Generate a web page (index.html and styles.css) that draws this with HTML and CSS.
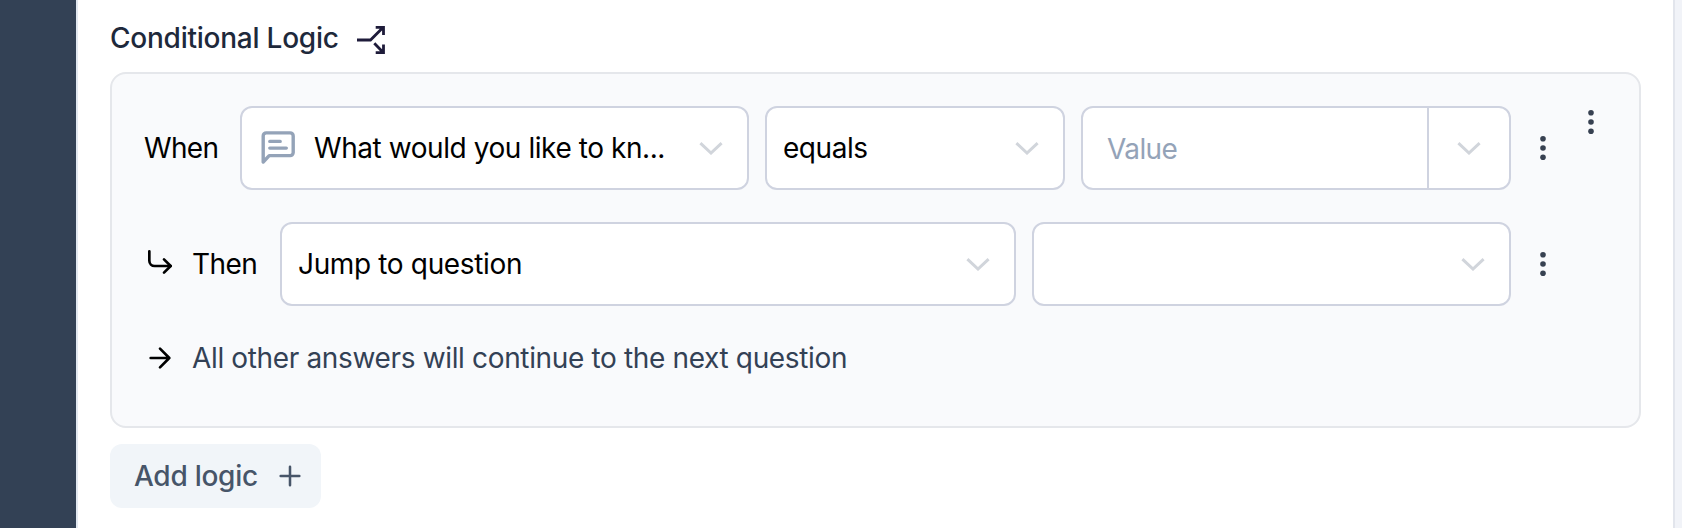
FILE: index.html
```html
<!DOCTYPE html>
<html lang="en">
<head>
<meta charset="utf-8">
<title>Conditional Logic</title>
<link rel="stylesheet" href="styles.css">
</head>
<body>
<svg class="defs" width="0" height="0">
  <symbol id="chevron" viewBox="0 0 24 13"><path d="M1.4 1.2L12 11l10.6-9.8" fill="none" stroke="currentColor" stroke-width="3"/></symbol>
  <symbol id="dots" viewBox="0 0 8 26"><g fill="currentColor"><circle cx="4" cy="3.7" r="2.8"/><circle cx="4" cy="13" r="2.8"/><circle cx="4" cy="22.3" r="2.8"/></g></symbol>
</svg>
<div class="app">
  <aside class="sidebar"></aside>
  <main class="content">
    <h1 class="heading"><span class="heading-text">Conditional Logic</span>
      <svg class="split" viewBox="0 0 32 32"><path d="M3 16H16.5L29 3.6M21.7 3.4h7.8v7.6M20.3 19.3l8.7 8.9M21.7 28.6h7.8v-8"/></svg>
    </h1>
    <section class="panel">
      <div class="rules">
        <div class="row">
          <span class="label when">When</span>
          <div class="select question">
            <svg class="message" viewBox="0 0 36 36"><path d="M3.2 32V5.9a3 3 0 0 1 3-3h24a3 3 0 0 1 3 3v16.7a3 3 0 0 1-3 3H9.2z"/><path d="M9.8 11.4h10.4M9.8 18.1h16.5"/></svg>
            <span class="text long">What would you like to kn...</span>
            <svg class="chevron"><use href="#chevron"/></svg>
          </div>
          <div class="select operator"><span class="text equals">equals</span><svg class="chevron"><use href="#chevron"/></svg></div>
          <div class="select value"><span class="placeholder">Value</span><span class="toggle"><svg class="chevron"><use href="#chevron"/></svg></span></div>
          <svg class="dots"><use href="#dots"/></svg>
        </div>
        <div class="row">
          <svg class="icon" viewBox="0 0 24 24"><path d="M15 10l5 5-5 5"/><path d="M4 4v7a4 4 0 0 0 4 4h12"/></svg>
          <span class="label then">Then</span>
          <div class="select action"><span class="text jump">Jump to question</span><svg class="chevron"><use href="#chevron"/></svg></div>
          <div class="select target"><svg class="chevron"><use href="#chevron"/></svg></div>
          <svg class="dots"><use href="#dots"/></svg>
        </div>
        <div class="fallback">
          <svg class="icon" viewBox="0 0 24 24"><path d="M5 12h14M12 5l7 7-7 7"/></svg>
          <span class="fallback-text">All other answers will continue to the next question</span>
        </div>
      </div>
      <svg class="dots menu"><use href="#dots"/></svg>
    </section>
    <button class="add" type="button"><span class="add-text">Add logic</span>
      <svg class="plus" viewBox="0 0 24 24"><path d="M5 12h14M12 5v14"/></svg>
    </button>
  </main>
  <div class="edge"></div>
</div>
</body>
</html>
```
FILE: styles.css
```css
* { box-sizing: border-box; }
body { margin: 0; background: #fff; font-family: Inter, "Liberation Sans", sans-serif; font-size: 28px; line-height: 40px; color: #000; }
.defs { position: absolute; }
.app { display: flex; height: 528px; overflow: hidden; }
.sidebar { width: 78px; background: #334155; border-right: 2px solid #e2e8f0; flex: none; }
.content { flex: 1; padding: 18px 32px 0; }
.edge { width: 9px; background: #f1f3f8; border-left: 2px solid #e2e5ec; flex: none; }
.heading { display: flex; align-items: center; gap: 16px; margin: 0; height: 40px; font-size: 28px; font-weight: 500; color: #1e293b; }
.heading-text { width: 228px; white-space: nowrap; letter-spacing: -0.24px; }
.split { width: 32px; height: 32px; margin-top: 4px; fill: none; stroke: #1e1b3a; stroke-width: 2.8; }
.panel { display: flex; margin-top: 14px; width: 1531px; height: 356px; padding: 32px; border: 2px solid #e5e7eb; border-radius: 16px; background: #f9fafc; }
.rules { display: flex; flex-direction: column; gap: 32px; width: 1403px; }
.row { display: flex; align-items: center; height: 84px; }
.label, .text, .placeholder, .fallback-text, .add-text { white-space: nowrap; }
.when { width: 96px; letter-spacing: -0.65px; }
.then { width: 88px; margin-left: 16px; letter-spacing: -0.55px; flex: none; }
.select { display: flex; align-items: center; justify-content: space-between; height: 84px; padding: 0 24px 0 16px; border: 2px solid #cfd3e0; border-radius: 12px; background: #fff; flex: none; }
.question { width: 509px; }
.operator { width: 300px; margin-left: 16px; }
.value { width: 430px; margin-left: 16px; padding: 0 0 0 24px; }
.action { width: 736px; }
.target { width: 479px; margin-left: 16px; justify-content: flex-end; }
.message { width: 36px; height: 36px; margin: 0 18px 0 2px; fill: none; stroke: #94a3b8; stroke-width: 3.4; stroke-linecap: round; stroke-linejoin: round; flex: none; }
.long { flex: 1; letter-spacing: -0.43px; }
.equals { letter-spacing: -0.45px; }
.jump { letter-spacing: -0.35px; }
.placeholder { color: #94a3b8; padding-top: 2px; letter-spacing: -0.6px; }
.toggle { display: flex; align-items: center; justify-content: center; width: 82px; height: 80px; border-left: 2px solid #cfd3e0; }
.chevron { width: 24px; height: 13px; color: #d1d5db; flex: none; }
.dots { width: 8px; height: 26px; margin-left: 28px; color: #374151; flex: none; }
.menu { margin: 3px 0 0 40px; }
.icon { width: 32px; height: 32px; margin-top: -4px; fill: none; stroke: #000; stroke-width: 2; stroke-linecap: round; stroke-linejoin: round; flex: none; }
.fallback { display: flex; align-items: center; gap: 16px; height: 40px; color: #334155; }
.fallback .icon { margin-top: 0; }
.fallback-text { letter-spacing: -0.35px; }
.add { display: flex; align-items: center; margin: 16px 0 0; width: 211px; height: 64px; padding: 0 0 0 24px; border: 0; border-radius: 12px; background: #f1f5f9; font: 500 28px/40px Inter, "Liberation Sans", sans-serif; color: #475569; }
.add-text { width: 140px; text-align: left; letter-spacing: -0.27px; }
.plus { width: 32px; height: 32px; fill: none; stroke: #475569; stroke-width: 1.9; stroke-linecap: round; }
```
